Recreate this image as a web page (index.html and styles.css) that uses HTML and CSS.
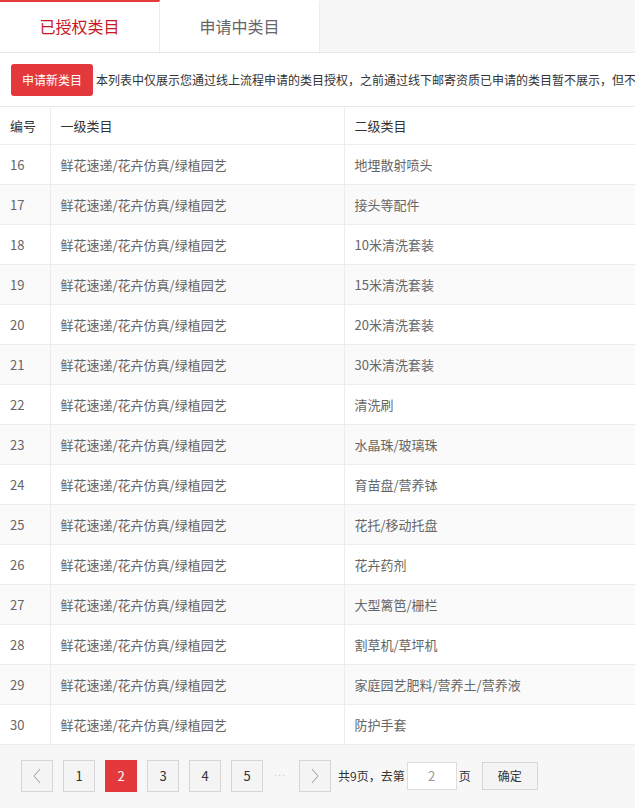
FILE: index.html
```html
<!DOCTYPE html>
<html lang="zh-CN">
<head>
<meta charset="utf-8">
<title>已授权类目</title>
<link rel="stylesheet" href="styles.css">
</head>
<body>
<div class="page">
  <div class="tabs">
    <div class="tab active">已授权类目</div>
    <div class="tab">申请中类目</div>
  </div>
  <div class="toolbar">
    <button class="btn-apply">申请新类目</button>
    <span class="notice">本列表中仅展示您通过线上流程申请的类目授权，之前通过线下邮寄资质已申请的类目暂不展示，但不</span>
  </div>
  <table class="grid">
    <colgroup><col class="c1"><col class="c2"><col class="c3"></colgroup>
    <thead>
      <tr><th>编号</th><th>一级类目</th><th>二级类目</th></tr>
    </thead>
    <tbody>
      <tr><td>16</td><td>鲜花速递/花卉仿真/绿植园艺</td><td>地埋散射喷头</td></tr>
      <tr><td>17</td><td>鲜花速递/花卉仿真/绿植园艺</td><td>接头等配件</td></tr>
      <tr><td>18</td><td>鲜花速递/花卉仿真/绿植园艺</td><td>10米清洗套装</td></tr>
      <tr><td>19</td><td>鲜花速递/花卉仿真/绿植园艺</td><td>15米清洗套装</td></tr>
      <tr><td>20</td><td>鲜花速递/花卉仿真/绿植园艺</td><td>20米清洗套装</td></tr>
      <tr><td>21</td><td>鲜花速递/花卉仿真/绿植园艺</td><td>30米清洗套装</td></tr>
      <tr><td>22</td><td>鲜花速递/花卉仿真/绿植园艺</td><td>清洗刷</td></tr>
      <tr><td>23</td><td>鲜花速递/花卉仿真/绿植园艺</td><td>水晶珠/玻璃珠</td></tr>
      <tr><td>24</td><td>鲜花速递/花卉仿真/绿植园艺</td><td>育苗盘/营养钵</td></tr>
      <tr><td>25</td><td>鲜花速递/花卉仿真/绿植园艺</td><td>花托/移动托盘</td></tr>
      <tr><td>26</td><td>鲜花速递/花卉仿真/绿植园艺</td><td>花卉药剂</td></tr>
      <tr><td>27</td><td>鲜花速递/花卉仿真/绿植园艺</td><td>大型篱笆/栅栏</td></tr>
      <tr><td>28</td><td>鲜花速递/花卉仿真/绿植园艺</td><td>割草机/草坪机</td></tr>
      <tr><td>29</td><td>鲜花速递/花卉仿真/绿植园艺</td><td>家庭园艺肥料/营养土/营养液</td></tr>
      <tr><td>30</td><td>鲜花速递/花卉仿真/绿植园艺</td><td>防护手套</td></tr>
    </tbody>
  </table>
  <div class="pager">
    <span class="pg arrow">
      <svg width="10" height="16" viewBox="0 0 10 16"><path d="M8 1 L2 8 L8 15" fill="none" stroke="#999" stroke-width="1"/></svg>
    </span>
    <span class="pg">1</span>
    <span class="pg current">2</span>
    <span class="pg">3</span>
    <span class="pg">4</span>
    <span class="pg">5</span>
    <span class="dots">...</span>
    <span class="pg arrow">
      <svg width="10" height="16" viewBox="0 0 10 16"><path d="M2 1 L8 8 L2 15" fill="none" stroke="#999" stroke-width="1"/></svg>
    </span>
    <span class="total">共9页，去第</span>
    <input class="goto" type="text" value="2">
    <span class="unit">页</span>
    <button class="btn-ok">确定</button>
  </div>
</div>
</body>
</html>
```

FILE: styles.css
```css
* { box-sizing: border-box; }
html, body { margin: 0; padding: 0; background: #fff; }
body {
  font-family: "Microsoft YaHei", "Noto Sans CJK SC", "Noto Sans", sans-serif;
  color: #333;
  width: 635px;
  overflow: hidden;
}
.page { width: 635px; overflow: hidden; }

.tabs {
  display: flex;
  height: 53px;
  background: #f7f7f7;
  border-bottom: 1px solid #e8e8e8;
}
.tab {
  width: 160px;
  height: 52px;
  background: #fff;
  border-right: 1px solid #ececec;
  display: flex;
  align-items: center;
  justify-content: center;
  font-size: 16px;
  color: #666;
  border-top: 2px solid transparent;
  padding-bottom: 2px;
}
.tab.active {
  color: #c81623;
  border-top-color: #e4393c;
}

.toolbar {
  height: 54px;
  display: flex;
  align-items: center;
  padding-left: 11px;
  white-space: nowrap;
  overflow: hidden;
  border-bottom: 1px solid #e8e8e8;
}
.btn-apply {
  flex: none;
  height: 32px;
  width: 82px;
  border: 0;
  border-radius: 3px;
  background: #e4393c;
  color: #fff;
  font-family: inherit;
  font-size: 12px;
  padding: 0;
  margin-right: 3px;
}
.notice { font-size: 12px; color: #333; }

.grid {
  width: 800px;
  table-layout: fixed;
  border-collapse: collapse;
  font-size: 13px;
}
.grid col.c1 { width: 50px; }
.grid col.c2 { width: 294px; }
.grid col.c3 { width: 456px; }
.grid th, .grid td {
  text-align: left;
  padding: 0 10px;
  border-bottom: 1px solid #ececec;
  border-right: 1px solid #ececec;
  white-space: nowrap;
}
.grid th {
  height: 37px;
  font-weight: normal;
  color: #333;
}
.grid td {
  height: 40px;
  color: #666;
}
.grid tbody tr:nth-child(even) td { background: #fafafa; }

.pager {
  background: #f7f7f7;
  height: 64px;
  display: flex;
  align-items: center;
  padding: 0 0 2px 21px;
  white-space: nowrap;
  font-size: 12px;
  color: #333;
}
.pg {
  flex: none;
  width: 32px;
  height: 32px;
  border: 1px solid #d6d6d6;
  background: #f4f4f4;
  display: flex;
  align-items: center;
  justify-content: center;
  font-size: 13px;
  color: #333;
  margin-right: 10px;
}
.pg.current {
  background: #e4393c;
  border-color: #e4393c;
  color: #fff;
}
.dots {
  width: 26px;
  padding-left: 1px;
  color: #ccc;
  font-family: "Liberation Sans", sans-serif;
  font-size: 11px;
  letter-spacing: 1px;
  margin-top: -8px;
}
.pg.arrow { margin-right: 7px; }
.pg.arrow:first-child { margin-right: 10px; }
.total { margin-right: 2px; }
.goto {
  width: 50px;
  height: 28px;
  border: 1px solid #ddd;
  background: #fff;
  text-align: center;
  color: #999;
  font-family: inherit;
  font-size: 13px;
  padding: 0;
  margin: 0;
}
.unit { margin-left: 2px; margin-right: 11px; }
.btn-ok {
  width: 56px;
  height: 28px;
  border: 1px solid #d6d6d6;
  background: #f4f4f4;
  font-family: inherit;
  font-size: 12px;
  color: #333;
  padding: 0;
}
```
